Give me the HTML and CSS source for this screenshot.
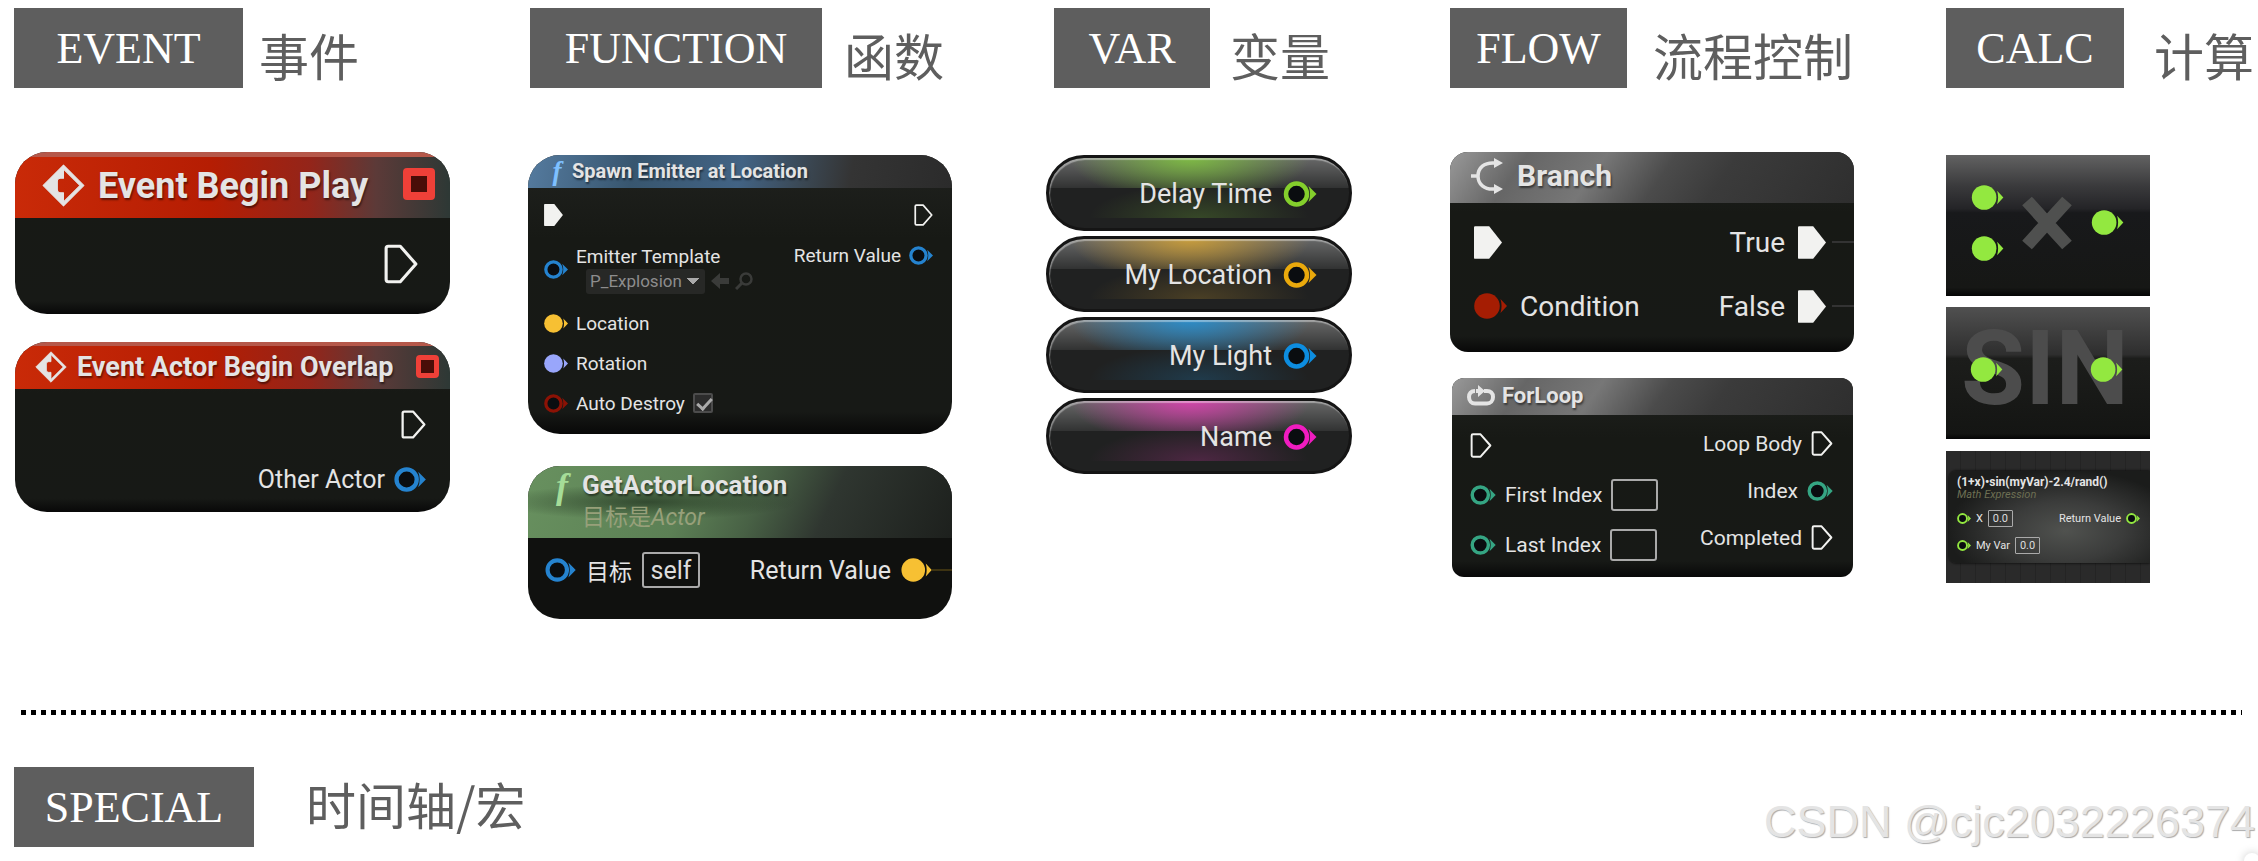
FILE: index.html
```html
<!DOCTYPE html>
<html lang="zh-CN">
<head>
  <meta charset="UTF-8" />
  <meta name="viewport" content="width=device-width, initial-scale=1.0" />
  <title>Blueprint Nodes</title>
  <link rel="stylesheet" href="styles.css">
</head>
<body>
  <!-- Shared icons -->
  <svg class="sprite" aria-hidden="true">
    <symbol id="pin" viewBox="0 0 33 26">
      <circle cx="13" cy="13" r="10.5" fill="#0a0d10" stroke="currentColor" stroke-width="4.5"/>
      <path d="M25 5 33 13l-8 8c2-5 2-11 0-16z" fill="currentColor"/>
    </symbol>
    <symbol id="pin-full" viewBox="0 0 33 26">
      <circle cx="13" cy="13" r="12.8" fill="currentColor"/>
      <path d="M26.5 6 33 13l-6.5 7c1.4-4.6 1.4-9.4 0-14z" fill="currentColor"/>
    </symbol>
    <symbol id="exec" viewBox="0 0 24 28">
      <path d="M3 1.5h8.5L22.5 14 11.5 26.5H3Q1.5 26.5 1.5 25V3Q1.5 1.5 3 1.5z" fill="none" stroke="currentColor" stroke-width="2.2" stroke-linejoin="round"/>
    </symbol>
    <symbol id="exec-full" viewBox="0 0 24 28">
      <path d="M1 0h12L24 14 13 28H1Q0 28 0 27V1Q0 0 1 0z" fill="currentColor"/>
    </symbol>
    <symbol id="event" viewBox="0 0 42 42">
      <path d="M21 1 41 21 21 41 1 21zM21 5v9h-3q-3 0-3 3v8q0 3 3 3h3v9l16-16z" fill="currentColor" fill-rule="evenodd" stroke="currentColor" stroke-linejoin="round"/>
    </symbol>
  </svg>

  <main class="board">
    <section class="group">
      <h2 class="heading heading--event"><span class="badge">EVENT</span><span class="heading__cn">事件</span></h2>
      <div class="nodes">
        <article class="node node--play">
          <header class="node__head head--red">
            <svg class="icon-event"><use href="#event"/></svg>
            <h3 class="node__title">Event Begin Play</h3>
            <i class="delegate"></i>
          </header>
          <div class="node__body">
            <ul class="pins pins--out">
              <li class="pin"><svg class="exec"><use href="#exec"/></svg></li>
            </ul>
          </div>
        </article>
        <article class="node node--overlap">
          <header class="node__head head--red">
            <svg class="icon-event"><use href="#event"/></svg>
            <h3 class="node__title">Event Actor Begin Overlap</h3>
            <i class="delegate"></i>
          </header>
          <div class="node__body">
            <ul class="pins pins--out">
              <li class="pin"><svg class="exec"><use href="#exec"/></svg></li>
              <li class="pin">Other Actor<svg class="data blue"><use href="#pin"/></svg></li>
            </ul>
          </div>
        </article>
      </div>
    </section>

    <section class="group group--low">
      <h2 class="heading heading--function"><span class="badge">FUNCTION</span><span class="heading__cn">函数</span></h2>
      <div class="nodes">
        <article class="node node--spawn">
          <header class="node__head head--blue">
            <span class="fn">f</span>
            <h3 class="node__title">Spawn Emitter at Location</h3>
          </header>
          <div class="node__body">
            <ul class="pins">
              <li class="pin"><svg class="exec"><use href="#exec-full"/></svg></li>
              <li class="pin pin--tall">
                <svg class="data blue"><use href="#pin"/></svg>
                <div class="asset">
                  <label for="template">Emitter Template</label>
                  <div class="asset__row">
                    <select id="template" class="asset__select"><option>P_Explosion</option></select>
                    <svg class="asset__icon" viewBox="0 0 18 18"><path d="M0 9 9 1v5h9v6H9v5z" fill="currentColor"/></svg>
                    <svg class="asset__icon" viewBox="0 0 18 18"><circle cx="11" cy="7" r="5.5" fill="none" stroke="currentColor" stroke-width="2.5"/><path d="M7 11 1 17" stroke="currentColor" stroke-width="3"/></svg>
                  </div>
                </div>
              </li>
              <li class="pin"><svg class="data gold"><use href="#pin-full"/></svg>Location</li>
              <li class="pin"><svg class="data lilac"><use href="#pin-full"/></svg>Rotation</li>
              <li class="pin"><svg class="data maroon"><use href="#pin"/></svg><label for="destroy">Auto Destroy</label><input id="destroy" class="check" type="checkbox" checked></li>
            </ul>
            <ul class="pins pins--out">
              <li class="pin"><svg class="exec"><use href="#exec"/></svg></li>
              <li class="pin">Return Value<svg class="data blue"><use href="#pin"/></svg></li>
            </ul>
          </div>
        </article>
        <article class="node node--getactor">
          <header class="node__head head--green">
            <span class="fn">f</span>
            <div>
              <h3 class="node__title">GetActorLocation</h3>
              <p class="node__sub">目标是<em>Actor</em></p>
            </div>
          </header>
          <div class="node__body">
            <ul class="pins">
              <li class="pin"><svg class="data blue"><use href="#pin"/></svg><label for="self">目标</label><input id="self" class="field" type="text" value="self"></li>
            </ul>
            <ul class="pins pins--out">
              <li class="pin">Return Value<svg class="data gold"><use href="#pin-full"/></svg><i class="wire"></i></li>
            </ul>
          </div>
        </article>
      </div>
    </section>

    <section class="group group--low">
      <h2 class="heading heading--var"><span class="badge">VAR</span><span class="heading__cn">变量</span></h2>
      <ul class="nodes vars">
        <li class="var var--float">Delay Time<svg class="data lime"><use href="#pin"/></svg></li>
        <li class="var var--vector">My Location<svg class="data amber"><use href="#pin"/></svg></li>
        <li class="var var--object">My Light<svg class="data azure"><use href="#pin"/></svg></li>
        <li class="var var--name">Name<svg class="data pink"><use href="#pin"/></svg></li>
      </ul>
    </section>

    <section class="group">
      <h2 class="heading heading--flow"><span class="badge">FLOW</span><span class="heading__cn">流程控制</span></h2>
      <div class="nodes">
        <article class="node node--branch">
          <header class="node__head head--grey">
            <svg class="icon-branch" viewBox="0 0 32 36"><path d="M0 18h7M24 5C13 4 7 10 7 18s6 14 17 13" fill="none" stroke="currentColor" stroke-width="3.5"/><path d="M23 0l9 5-9 5zM23 26l9 5-9 5z" fill="currentColor"/></svg>
            <h3 class="node__title">Branch</h3>
          </header>
          <div class="node__body">
            <ul class="pins">
              <li class="pin"><svg class="exec"><use href="#exec-full"/></svg></li>
              <li class="pin"><svg class="data red"><use href="#pin-full"/></svg>Condition</li>
            </ul>
            <ul class="pins pins--out">
              <li class="pin">True<svg class="exec"><use href="#exec-full"/></svg><i class="wire"></i></li>
              <li class="pin">False<svg class="exec"><use href="#exec-full"/></svg><i class="wire"></i></li>
            </ul>
          </div>
        </article>
        <article class="node node--loop">
          <header class="node__head head--grey">
            <svg class="icon-loop" viewBox="0 0 28 21"><path d="M8 6C4 6 2 8.5 2 12s2.5 6.5 6 6.5h12c3.5 0 6-2.500 6-6.500s-2.500-6-6-6h-3" fill="none" stroke="currentColor" stroke-width="4"/><path d="M11 0l7 6-7 6V8H9V4h2z" fill="currentColor"/></svg>
            <h3 class="node__title">ForLoop</h3>
          </header>
          <div class="node__body">
            <ul class="pins">
              <li class="pin"><svg class="exec"><use href="#exec"/></svg></li>
              <li class="pin"><svg class="data teal"><use href="#pin"/></svg><label for="first">First Index</label><input id="first" class="field" type="text"></li>
              <li class="pin"><svg class="data teal"><use href="#pin"/></svg><label for="last">Last Index</label><input id="last" class="field" type="text"></li>
            </ul>
            <ul class="pins pins--out">
              <li class="pin">Loop Body<svg class="exec"><use href="#exec"/></svg></li>
              <li class="pin">Index<svg class="data teal"><use href="#pin"/></svg></li>
              <li class="pin">Completed<svg class="exec"><use href="#exec"/></svg></li>
            </ul>
          </div>
        </article>
      </div>
    </section>

    <section class="group group--low">
      <h2 class="heading heading--calc"><span class="badge">CALC</span><span class="heading__cn">计算</span></h2>
      <div class="nodes tiles">
        <div class="tile tile--multiply">
          <div class="tile__pins">
            <svg class="data green"><use href="#pin-full"/></svg>
            <svg class="data green"><use href="#pin-full"/></svg>
          </div>
          <svg class="times" viewBox="0 0 50 54"><path d="M5 5l40 44M45 5 5 49" stroke="currentColor" stroke-width="13"/></svg>
          <svg class="data green"><use href="#pin-full"/></svg>
        </div>
        <div class="tile tile--sin">
          <span class="tile__glyph">SIN</span>
          <svg class="data green"><use href="#pin-full"/></svg>
          <svg class="data green"><use href="#pin-full"/></svg>
        </div>
        <div class="tile tile--math">
          <article class="math">
            <h3 class="math__title">(1+x)•sin(myVar)-2.4/rand()</h3>
            <p class="math__sub">Math Expression</p>
            <div class="node__body">
              <ul class="pins">
                <li class="pin"><svg class="data green"><use href="#pin"/></svg><label for="x">X</label><input id="x" class="field" type="text" value="0.0"></li>
                <li class="pin"><svg class="data green"><use href="#pin"/></svg><label for="myvar">My Var</label><input id="myvar" class="field" type="text" value="0.0"></li>
              </ul>
              <ul class="pins pins--out">
                <li class="pin">Return Value<svg class="data green"><use href="#pin"/></svg></li>
              </ul>
            </div>
          </article>
        </div>
      </div>
    </section>
  </main>

  <hr class="divider">

  <footer class="footer">
    <h2 class="heading heading--special"><span class="badge">SPECIAL</span><span class="heading__cn">时间轴/宏</span></h2>
    <p class="watermark">CSDN @cjc2032226374</p>
    <i class="corner"></i>
  </footer>
</body>
</html>
```
FILE: styles.css
```css
*{margin:0;padding:0;box-sizing:border-box;}
body{
  font-family:Roboto,"Noto Sans CJK SC",sans-serif;
  background:#fff;color:#e4e4e4;
  min-height:100vh;
}
ul{list-style:none;}
svg{display:block;flex:none;}
.sprite{position:absolute;width:0;height:0;}

.board{
  display:grid;
  grid-template-columns:514fr 518fr 404fr 496fr 312fr;
  padding:8px 0 0 14px;
}

/* Headings */
.heading{display:flex;height:80px;font-weight:400;white-space:nowrap;}
.badge{
  display:flex;align-items:center;justify-content:center;
  background:#5e5e5e;color:#fff;
  font-family:"Liberation Serif",serif;font-size:44px;
}
.heading__cn{
  color:#5e5e5e;font-family:"Noto Sans CJK SC",sans-serif;
  font-size:50px;line-height:92px;
}
.heading--event{gap:16px;}
.heading--event .badge{width:229px;}
.heading--function{gap:22px;padding-left:2px;}
.heading--function .badge{width:292px;}
.heading--var{gap:20px;padding-left:8px;}
.heading--var .badge{width:156px;}
.heading--flow{gap:26px;}
.heading--flow .badge{width:177px;}
.heading--calc{gap:30px;}
.heading--calc .badge{width:178px;}
.heading--special{gap:52px;}
.heading--special .badge{width:240px;}
.heading--special .heading__cn{line-height:72px;}

/* Nodes */
.nodes{padding-top:64px;}
.group--low .nodes{padding-top:67px;}
.node{
  overflow:hidden;border-radius:32px;
  background:linear-gradient(#20221f,#171915 30%,#171916 92%,#080808);
}
.node__head{display:flex;align-items:center;}
.node__title{font-weight:700;white-space:nowrap;text-shadow:1px 2px 2px rgba(0,0,0,.5);}
.node__body{display:flex;justify-content:space-between;}
.pin{display:flex;align-items:center;position:relative;white-space:nowrap;}
.pins--out .pin{justify-content:flex-end;}
.exec{color:#f2f2f0;}
.field{
  background:transparent;border:2px solid #aaa;border-radius:3px;
  color:#ddd;font:inherit;text-align:center;
}
.wire{position:absolute;left:100%;width:40px;height:2px;margin-left:6px;background:#333;}

.blue{color:#2583cf;}
.gold{color:#f7c033;}
.lilac{color:#99a6fb;}
.maroon{color:#8c1205;}
.red{color:#a51d03;}
.teal{color:#35a583;}
.green{color:#93e840;}
.lime{color:#84cf2c;}
.amber{color:#eaa90c;}
.azure{color:#0d8de0;}
.pink{color:#f01cc0;}

.head--red{
  border-top:5px solid #b5584a;
  background:linear-gradient(90deg,#c92a08,#b51d03 45%,#93251a 68%,#5c3a38 83%,#2d3835);
}
.head--blue{background:linear-gradient(100deg,#557b9f,#38566f 25%,#426384 50%,#3a4651 66%,#343434 76%,#2b2b2b);}
.head--green{
  background:
    radial-gradient(ellipse at 28% 50%,rgba(22,36,22,.6),transparent 35%),
    linear-gradient(115deg,#68915f,#5c8055 38%,#486145 54%,#2f3630 70%,#1d201d);
}
.head--grey{background:linear-gradient(125deg,#999,#666 18%,#777 36%,#4b4b4b 52%,#3b3b3b 66%,#2e2e2e);}

/* Event nodes */
.node--play,.node--overlap{max-width:435px;margin-left:1px;}
.delegate{margin-left:auto;border:8px solid #ef4038;border-radius:4px;background:#4a0d08;}
.node--play{height:162px;margin-bottom:28px;}
.node--play .node__head{height:66px;padding:0 15px 4px 27px;gap:13px;}
.node--play .node__title{font-size:36px;}
.node--play .icon-event{width:43px;height:43px;}
.node--play .delegate{width:32px;height:32px;margin-bottom:4px;}
.node--play .pins,.node--overlap .pins{flex:1;}
.node--play .pin{height:92px;padding-right:32px;}
.node--play .exec{width:34px;height:40px;}

.node--overlap{height:170px;}
.node--overlap .node__head{height:47px;padding:0 11px 2px 20px;gap:10px;border-top-width:4px;}
.node--overlap .node__title{font-size:27px;}
.node--overlap .icon-event{width:32px;height:32px;}
.node--overlap .delegate{width:23px;height:23px;border-width:5px;}
.node--overlap .node__body{padding:8px 24px 0 0;font-size:25px;}
.node--overlap .pin{height:55px;gap:9px;}
.node--overlap .exec{width:25px;height:29px;}
.node--overlap .data{width:32px;height:25px;}

/* Function nodes */
.node--spawn,.node--getactor{max-width:424px;}
.fn{font-family:"Liberation Serif",serif;font-style:italic;font-weight:700;text-align:center;}
.node--spawn{height:279px;margin-bottom:32px;}
.node--spawn .node__head{height:33px;padding-left:14px;}
.node--spawn .fn{width:30px;font-size:27px;line-height:33px;color:#7ec0ff;}
.node--spawn .node__title{font-size:20px;line-height:30px;padding-bottom:2px;}
.node--spawn .node__body{padding:7px 19px 0 16px;font-size:19px;}
.node--spawn .pin{height:40px;gap:8px;}
.node--spawn .pin--tall{height:68px;}
.node--spawn .exec{width:19px;height:22px;}
.node--spawn .data{width:24px;height:19px;}
.asset{line-height:24px;}
.asset__row{display:flex;align-items:center;gap:6px;padding-left:10px;color:#3a3b39;}
.asset__select{
  appearance:none;width:119px;height:25px;padding:0 4px;
  border:0;border-radius:3px;color:#8d8d8d;font:inherit;font-size:17px;
  background:conic-gradient(from -45deg at 50% 100%,#aaa 90deg,transparent 0) 101px 9px/12px 6px no-repeat,#272826;
  background:conic-gradient(from -45deg at 50% 100%,#aaa 90deg,transparent 0) 101px 9px/12px 6px no-repeat,#272826;
}
.asset__icon{width:18px;height:18px;}
.check{
  appearance:none;width:20px;height:20px;border:2px solid #4c4c4c;border-radius:2px;
  background:#2c2c2c;
}
.check::after{
  content:"";display:block;width:6px;height:12px;margin:0 0 0 5px;
  border:solid #aaa;border-width:0 3px 3px 0;transform:rotate(42deg);
}

.node--getactor{height:153px;background:#10110f;}
.node--getactor .node__head{height:72px;padding-left:14px;align-items:flex-start;}
.node--getactor .fn{width:40px;font-size:36px;line-height:40px;color:#a5dd98;}
.node--getactor .node__title{font-size:26px;line-height:38px;}
.node--getactor .node__sub{font-size:23px;line-height:28px;color:#97a07a;}
.node--getactor .node__body{padding:0 20px 0 17px;font-size:25px;}
.node--getactor .pin{height:64px;gap:10px;}
.node--getactor .pin label{font-size:23px;}
.node--getactor .data{width:31px;height:24px;}
.node--getactor .field{width:58px;height:36px;}
.node--getactor .wire{background:#3d3312;margin-left:0;}

/* Variable pills */
.vars{display:flex;flex-direction:column;gap:5px;}
.var{
  --glow:132,207,60;
  display:flex;align-items:center;justify-content:flex-end;gap:11px;
  max-width:306px;height:76px;padding:2px 32px 0 0;
  border:3px solid #151515;border-radius:38px;font-size:27px;
  background:
    radial-gradient(ellipse 120px 44px at 47% 0,rgba(var(--glow),.8),transparent) 0 0/100% 30px no-repeat,
    linear-gradient(rgba(255,255,255,.32),rgba(255,255,255,.08)) 0 0/100% 30px no-repeat,
    radial-gradient(ellipse 110px 34px at 50% 100%,rgba(var(--glow),.22),transparent) 0 30px/100% 30px no-repeat,
    #202121;
  box-shadow:inset 1px 2px 1px rgba(255,255,255,.4);
}
.var .data{width:34px;height:26px;}
.var--vector{--glow:224,170,50;}
.var--object{--glow:30,150,225;}
.var--name{--glow:236,60,186;}

/* Flow nodes */
.node--branch{max-width:404px;height:200px;margin-bottom:26px;border-radius:18px;}
.node--branch .node__head{height:51px;padding:0 0 4px 21px;gap:14px;}
.icon-branch{width:32px;height:36px;}
.node--branch .node__title{font-size:30px;}
.node--branch .node__body{padding:7px 28px 0 24px;font-size:28px;}
.node--branch .pin{height:64px;gap:13px;}
.node--branch .exec{width:28px;height:33px;}
.node--branch .data{width:33px;height:28px;}

.node--loop{max-width:401px;height:199px;margin-left:2px;border-radius:12px;}
.node--loop .node__head{height:37px;padding:0 0 2px 15px;gap:7px;}
.icon-loop{width:28px;height:21px;}
.node--loop .node__title{font-size:22px;}
.node--loop .node__body{padding:5px 20px 0 18px;font-size:21px;}
.node--loop .pin{height:50px;gap:9px;}
.node--loop .pins--out .pin{height:47px;}
.node--loop .exec{width:22px;height:25px;}
.node--loop .data{width:26px;height:20px;}
.node--loop .field{width:47px;height:32px;}

/* Math tiles */
.tile{max-width:204px;height:132px;overflow:hidden;}
.tile .data{width:33px;height:25px;}
.tile--multiply{
  display:flex;align-items:center;height:141px;margin-bottom:11px;padding:0 26px 6px 25px;
  background:linear-gradient(#626262,#3a3a3c 22%,#242427 38%,#18191b 41%,#161715 94%,#050505);
}
.tile__pins{display:flex;flex-direction:column;gap:26px;}
.times{width:50px;height:54px;margin:0 auto 0 18px;color:#4f504f;}
.tile--sin{
  display:flex;align-items:center;justify-content:space-between;position:relative;
  margin-bottom:12px;padding:0 27px 8px 24px;
  background:linear-gradient(#505050,#2e2e2e 36%,#1c1d1b 39%,#141513 96%,#050505);
}
.tile__glyph{
  position:absolute;left:0;right:0;top:0;padding-right:6px;text-align:center;
  font-size:104px;line-height:124px;font-weight:700;color:#4c4c4c;
}
.tile--sin .data{position:relative;}
.tile--math{
  padding:20px 0 0 3px;
  background:
    repeating-linear-gradient(90deg,transparent 0 14px,#242424 14px 15px),
    #2a2a2a;
}
.math{
  height:92px;padding:4px 10px 0 8px;border-radius:7px 0 0 7px;
  background:radial-gradient(ellipse at 58% 65%,#50524f,#3b3c3b 35%,#1b1c1b 72%);
  box-shadow:0 0 3px #000;
}
.math__title{font-size:12px;line-height:14px;white-space:nowrap;}
.math__sub{font-size:11px;line-height:12px;font-style:italic;color:#6d6f53;}
.math .node__body{font-size:11px;padding-top:4px;}
.math .pin{height:27px;gap:5px;}
.math .data{width:14px;height:11px;}
.math .field{width:25px;height:17px;border-width:1px;border-radius:1px;}

.divider{
  height:5px;margin:91px 16px 52px 21px;border:0;
  background:repeating-linear-gradient(90deg,#000 0 5px,transparent 5px 10px);
}

.footer{
  display:flex;justify-content:space-between;position:relative;overflow:hidden;
  height:94px;padding-left:14px;
}
.watermark{
  padding:28px 3px 0 0;
  font-family:"Liberation Sans",sans-serif;font-size:45px;line-height:54px;
  color:#e4e4e4;text-shadow:1px 1px 1px #aaa;
}
.corner{
  position:absolute;right:-2px;bottom:-8px;width:16px;height:16px;border-radius:50%;
  background:#fff;box-shadow:0 0 10px #ccc;
}
```
